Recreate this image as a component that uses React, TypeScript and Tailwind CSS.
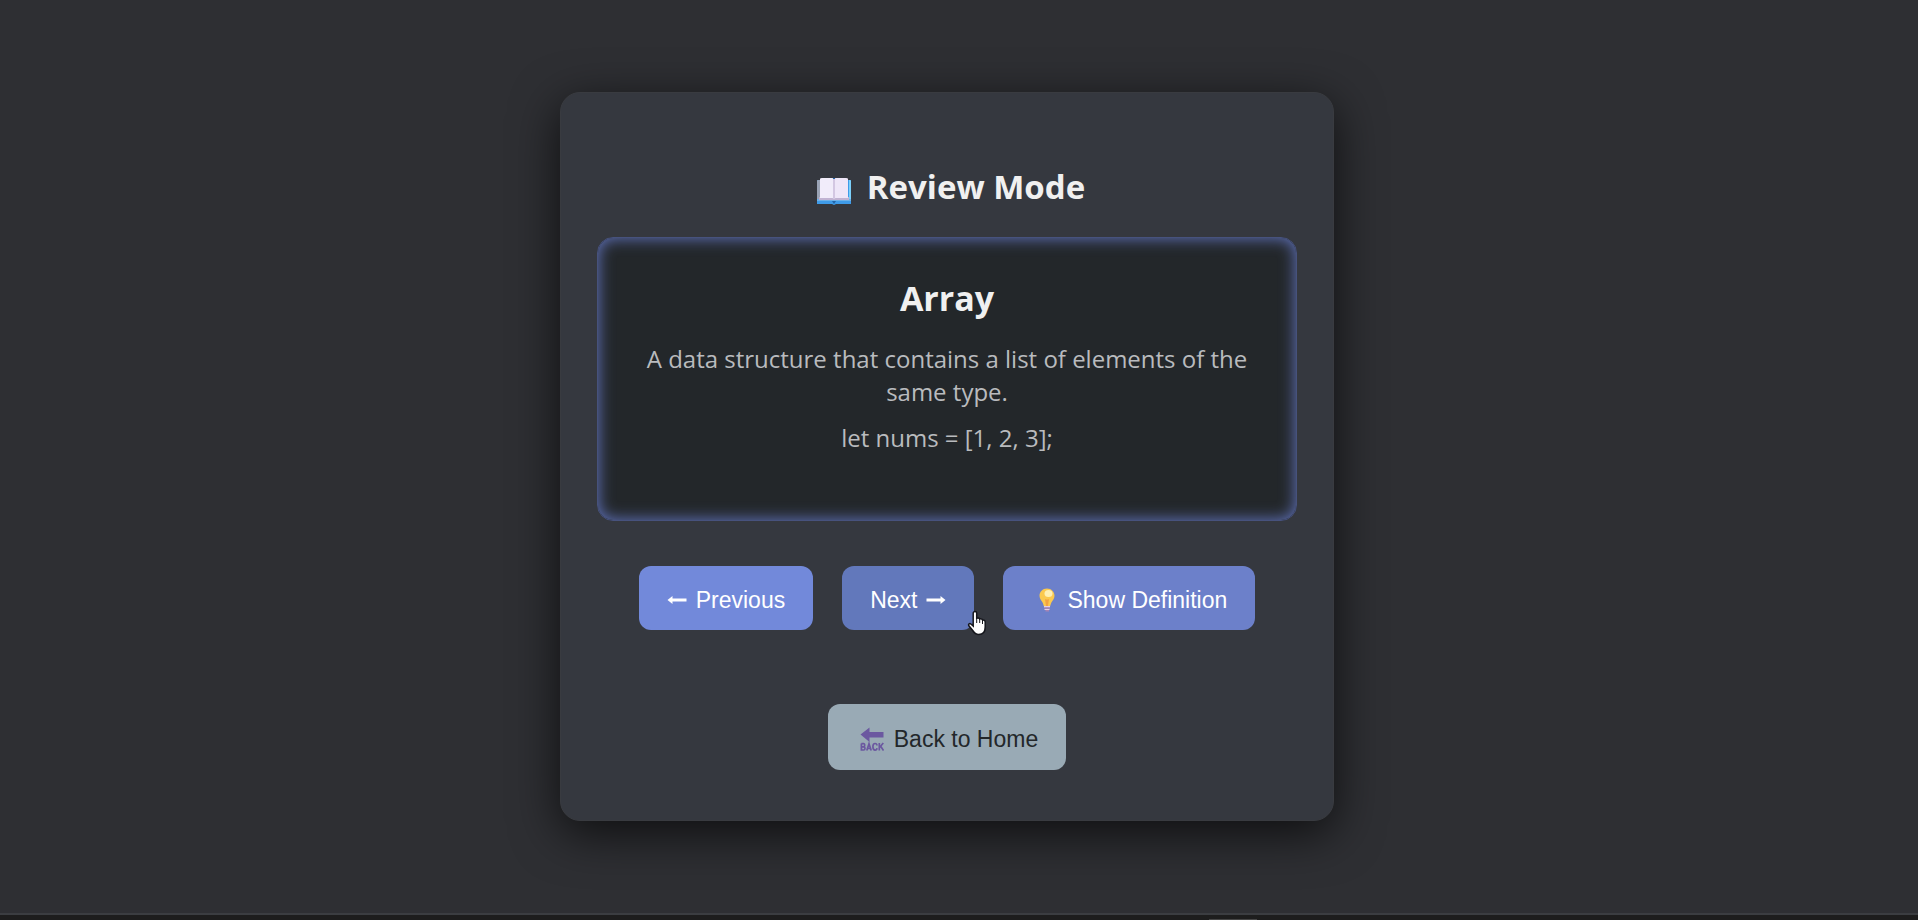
import type { ReactNode } from "react";

function BookIcon() {
  return (
    <svg viewBox="0 0 34 28" className="mt-2 h-7 w-[34px]" aria-hidden="true">
      <path d="M0 4q0-1 1-1h32q1 0 1 1v23H19l-2 1-2-1H0z" fill="#3f9be8" />
      <path d="M0 4q0-1 1-1h2v21H0z" fill="#9aa3b5" />
      <path d="M32 3h1q1 0 1 1v20h-2z" fill="#7bd0fa" />
      <path d="M0 22h34v2H0z" fill="#6db2ea" />
      <path d="M2 20h30v3H2z" fill="#c1b3d2" />
      <path d="M3 2q0-1 2-1h10q2 0 2 1v20q0-1-2-1H3z" fill="#f1ecfa" />
      <path d="M31 2q0-1-2-1H19q-2 0-2 1v20q0-1 2-1h12z" fill="#eee6f8" />
      <path d="M16 2h2v20h-2z" fill="#d3c7e2" />
      <path d="M16 1h2v1h-2zM15 24h4l-2 3z" fill="#2265a8" />
    </svg>
  );
}

function BulbIcon() {
  return (
    <svg viewBox="0 0 16 24" className="mr-3 ml-2 h-6 w-4" aria-hidden="true">
      <path d="M8 0.500C3.600.5.5 3.800.5 7.800c0 3 1.900 4.700 3.200 7 .8 1.500.9 3.200 1.300 3.700h6c.4-.5.500-2.200 1.300-3.700 1.300-2.300 3.200-4 3.200-7C15.500 3.800 12.400.5 8 .5z" fill="#fbc94f" />
      <ellipse cx="9.500" cy="5.500" rx="4" ry="3.500" fill="#fff0b4" />
      <path d="M6 11q2 1 4 0l-1 7H7z" fill="#f3a343" />
      <path d="M5 18h6v1.500H5zM5.500 21h5v1h-5z" fill="#e3cfe6" />
      <path d="M5.500 19.500h5.500v1.500H5.500zM6.500 22h3.500v1.500H6.500z" fill="#a584b4" />
    </svg>
  );
}

function BackIcon() {
  return (
    <svg viewBox="0 0 24 24" className="mr-[10px] ml-1 size-6" aria-hidden="true">
      <path d="M0.500 7.500 9.500.500v4.500H23.500v5.500H9.500V15z" fill="#6b58a0" />
      <g fill="none" stroke="#6b58a0" strokeWidth="1.700">
        <path d="M1.400 16.500v6.500h2.200q1.400 0 1.400-1.700 0-1.500-1.400-1.500H1.400M3.400 19.800q1.300 0 1.300-1.600t-1.300-1.500h-2" />
        <path d="M6.800 23.500 9 16.700l2.200 6.800M7.500 21.500h3" />
        <path d="M17 18.500q-.2-2-1.900-2-2.200 0-2.200 3.300t2.200 3.300q1.700 0 1.900-2" />
        <path d="M19.300 16v7.500M23.300 16l-3.800 4.500M20.500 19l3 4.500" />
      </g>
    </svg>
  );
}

function Arrow({ flip = false }: { flip?: boolean }) {
  return (
    <svg viewBox="0 0 20 10" className={flip ? "h-[10px] w-5 rotate-180" : "h-[10px] w-5"} aria-hidden="true">
      <path d="M0.500 5 5.500 1v2.500h14v3h-14V9z" fill="#fff" />
    </svg>
  );
}

function HandPointer() {
  return (
    <svg viewBox="0 0 20 26" className="absolute top-11 left-[125px] h-[26px] w-5" aria-hidden="true">
      <path
        d="M8 1.500c1 0 1.700.7 1.700 1.700v5c2-.5 2.700 0 3 .8 1.600-.4 2.500.1 2.800 1 1.500-.2 2.700.5 2.700 2V17c0 4-2 7.500-6.500 7.500-3 0-4.500-1.500-6-4L1.700 15.500c-.6-1.200.8-2.500 2.200-1.500l2.300 2V3.200c0-1 .8-1.700 1.800-1.700z"
        fill="#fff"
        stroke="#15161c"
        strokeWidth="1.500"
      />
      <path d="M9.700 8v5M12.700 9v4M15.500 10v4" stroke="#15161c" fill="none" />
    </svg>
  );
}

function Action({ tone, children }: { tone: string; children: ReactNode }) {
  return (
    <button type="button" className={`relative flex items-center rounded-xl px-7 pt-1 text-[23px] ${tone}`}>
      {children}
    </button>
  );
}

export default function App() {
  return (
    <div className="flex min-h-screen flex-col bg-[#2e2f33] font-['Liberation_Sans',Arial,sans-serif]">
      <main className="flex flex-1 items-center justify-center pr-6">
        <section className="w-full max-w-[774px] rounded-[20px] border border-[#393b40] bg-[#35383f] px-9 pt-[71px] pb-[50px] shadow-[0_12px_48px_rgba(0,0,0,0.7)]">
          <h1 className="flex items-center justify-center gap-4 pl-2 font-['Open_Sans','Noto_Sans',sans-serif] text-[33px] leading-[46px] font-bold text-[#f0f0f0]">
            <BookIcon />
            Review Mode
          </h1>
          <article className="mt-[27px] min-h-[284px] rounded-2xl border border-[#47527d] bg-[#23272a] px-12 pt-9 text-center font-['Open_Sans','Noto_Sans',sans-serif] shadow-[inset_0_0_16px_#6477c4]">
            <h2 className="text-[34px] leading-[48px] font-bold text-[#f0f0f0]">Array</h2>
            <p className="mt-5 text-[24px] leading-[33px] text-[#b9bbbe]">
              A data structure that contains a list of elements of the same type.
            </p>
            <p className="mt-[13px] text-[24px] leading-[33px] text-[#b9bbbe]">let nums = [1, 2, 3];</p>
          </article>
          <div className="mt-[45px] flex flex-wrap justify-center gap-[29px]">
            <Action tone="h-16 gap-[9px] bg-[#7289da] text-white">
              <Arrow />
              Previous
            </Action>
            <Action tone="h-16 gap-[9px] bg-[#6278bb] text-white">
              Next
              <Arrow flip />
              <HandPointer />
            </Action>
            <Action tone="h-16 bg-[#6c80ca] text-white">
              <BulbIcon />
              Show Definition
            </Action>
          </div>
          <div className="mt-[74px] flex justify-center">
            <Action tone="h-[66px] bg-[#99aab5] text-[#23272a]">
              <BackIcon />
              Back to Home
            </Action>
          </div>
        </section>
      </main>
      <footer className="flex h-[7px] items-end justify-center border-t-2 border-[#3b3d41] bg-[#1d1d1d] pl-[548px]">
        <div className="h-px w-12 bg-[#454545]" />
      </footer>
    </div>
  );
}
